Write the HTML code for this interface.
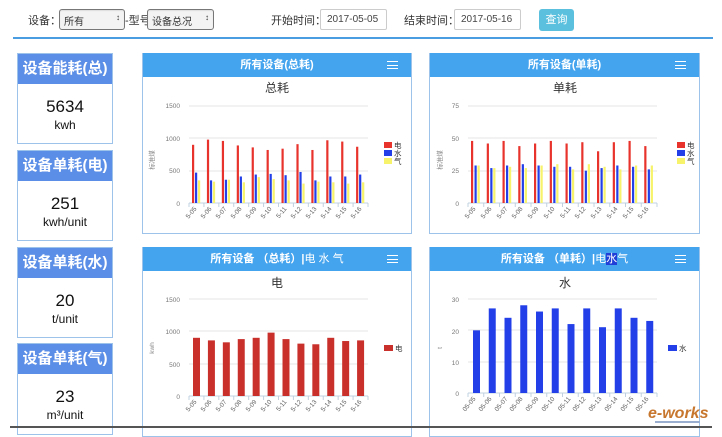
<!DOCTYPE html>
<html><head><meta charset="utf-8">
<style>
*{box-sizing:border-box;margin:0;padding:0}
body{width:722px;height:435px;background:#fff;position:relative;overflow:hidden;font-family:"Liberation Sans","Noto Sans CJK SC",sans-serif;color:#333}
.a{position:absolute}
.lbl{font-size:11px;color:#333;top:12px}
.sel{top:9px;height:21px;border:1px solid #777;border-radius:3px;background:#f3f3f3;font-size:10px;padding:3px 4px;box-shadow:inset 0 1px 1px #ddd}
.sel:after{content:"\2195";position:absolute;right:4px;top:3px;font-size:8px}
.inp{top:9px;height:21px;border:1px solid #ccc;border-radius:2px;font-size:10px;padding:4px 6px;color:#444}
.card{left:17px;width:96px;border:1px solid #9dc3ea}
.card .h{background:#5b8ee6;color:#fff;font-weight:bold;font-size:15px;height:30px;line-height:30px;text-align:center}
.card .n{text-align:center;font-size:17px;color:#111;margin-top:13px;line-height:20px}
.card .u{text-align:center;font-size:12px;color:#111;line-height:16px}
.pan{border:1px solid #9dc3ea;border-top:none}
.ph{position:absolute;left:0;right:0;top:0;height:24px;background:#45a4ee;color:#fff;font-weight:bold;font-size:11px;line-height:24px;text-align:center}
.hb{position:absolute;right:13px;top:8px;width:11px;height:8px;border-top:1px solid #fff;border-bottom:1px solid #fff}
.hb:after{content:"";position:absolute;left:0;right:0;top:2.5px;border-top:1px solid #fff}
svg{position:absolute;left:0;top:0}
svg text{font-family:"Liberation Sans","Noto Sans CJK SC",sans-serif}
</style></head><body>
<div class="a lbl" style="left:28px">设备：</div>
<div class="a sel" style="left:59px;width:66px">所有</div>
<div class="a lbl" style="left:125px">-型号</div>
<div class="a sel" style="left:147px;width:67px">设备总况</div>
<div class="a lbl" style="left:271px">开始时间：</div>
<div class="a inp" style="left:320px;width:67px">2017-05-05</div>
<div class="a lbl" style="left:404px">结束时间：</div>
<div class="a inp" style="left:454px;width:67px">2017-05-16</div>
<div class="a" style="left:539px;top:9px;width:35px;height:22px;background:#5bc0de;border-radius:3px;color:#fff;font-size:11px;line-height:22px;text-align:center">查询</div>
<div class="a" style="left:13px;top:37px;width:700px;height:2px;background:#4a9de0"></div>

<div class="a card" style="top:53px;height:91px"><div class="h">设备能耗(总)</div><div class="n">5634</div><div class="u">kwh</div></div>
<div class="a card" style="top:150px;height:91px"><div class="h">设备单耗(电)</div><div class="n">251</div><div class="u">kwh/unit</div></div>
<div class="a card" style="top:247px;height:91px"><div class="h">设备单耗(水)</div><div class="n">20</div><div class="u">t/unit</div></div>
<div class="a card" style="top:343px;height:92px"><div class="h">设备单耗(气)</div><div class="n">23</div><div class="u">m³/unit</div></div>

<div class="a pan" style="left:142px;top:53px;width:270px;height:181px"><div class="ph">所有设备(总耗)<div class="hb"></div></div></div>
<div class="a pan" style="left:429px;top:53px;width:271px;height:181px"><div class="ph">所有设备(单耗)<div class="hb"></div></div></div>
<div class="a pan" style="left:142px;top:247px;width:270px;height:190px"><div class="ph">所有设备 （总耗）|<span style="font-weight:normal">电 水 气</span><div class="hb"></div></div></div>
<div class="a pan" style="left:429px;top:247px;width:271px;height:190px"><div class="ph">所有设备 （单耗）|<span style="font-weight:normal">电<span style="background:#1f3fd6">水</span>气</span><div class="hb"></div></div></div>

<svg id="s" width="722" height="435" viewBox="0 0 722 435">
<g font-size="12" fill="#333" text-anchor="middle">
<text x="277" y="92">总耗</text><text x="565" y="92">单耗</text>
<text x="277" y="287">电</text><text x="565" y="287">水</text>
</g>
<g font-size="6.5" fill="#777" text-anchor="end">
<text x="180" y="108">1500</text><text x="180" y="141">1000</text><text x="180" y="173">500</text><text x="180" y="206">0</text>
<text x="459" y="108">75</text><text x="459" y="141">50</text><text x="459" y="173">25</text><text x="459" y="206">0</text>
<text x="180" y="302">1500</text><text x="180" y="334">1000</text><text x="180" y="367">500</text><text x="180" y="399">0</text>
<text x="459" y="302">30</text><text x="459" y="334">20</text><text x="459" y="365">10</text><text x="459" y="396">0</text>
</g>
<g font-size="6.5" fill="#888">
<text transform="translate(154,160) rotate(-90)" text-anchor="middle">标准煤</text>
<text transform="translate(442,160) rotate(-90)" text-anchor="middle">标准煤</text>
<text transform="translate(154,348) rotate(-90)" text-anchor="middle">kwh</text>
<text transform="translate(442,348) rotate(-90)" text-anchor="middle">t</text>
</g>
<g id="bars"></g>
<g font-size="7.5" fill="#333">
<rect x="384" y="142" width="8" height="6" fill="#e8332c"/><text x="394" y="148">电</text>
<rect x="384" y="150" width="8" height="6" fill="#2340e8"/><text x="394" y="156">水</text>
<rect x="384" y="158" width="8" height="6" fill="#f7f36a"/><text x="394" y="164">气</text>
<rect x="677" y="142" width="8" height="6" fill="#e8332c"/><text x="687" y="148">电</text>
<rect x="677" y="150" width="8" height="6" fill="#2340e8"/><text x="687" y="156">水</text>
<rect x="677" y="158" width="8" height="6" fill="#f7f36a"/><text x="687" y="164">气</text>
<rect x="384" y="345" width="9" height="6" fill="#c9302c"/><text x="395" y="351">电</text>
<rect x="668" y="345" width="9" height="6" fill="#2340e8"/><text x="679" y="351">水</text>
</g>
<g font-size="6.5" fill="#666" text-anchor="end">
<g transform="translate(0,209)">
<text transform="translate(197,0) rotate(-50)">5-05</text><text transform="translate(212,0) rotate(-50)">5-06</text><text transform="translate(227,0) rotate(-50)">5-07</text><text transform="translate(242,0) rotate(-50)">5-08</text><text transform="translate(257,0) rotate(-50)">5-09</text><text transform="translate(272,0) rotate(-50)">5-10</text><text transform="translate(287,0) rotate(-50)">5-11</text><text transform="translate(302,0) rotate(-50)">5-12</text><text transform="translate(317,0) rotate(-50)">5-13</text><text transform="translate(332,0) rotate(-50)">5-14</text><text transform="translate(347,0) rotate(-50)">5-15</text><text transform="translate(362,0) rotate(-50)">5-16</text>
</g>
<g transform="translate(0,209)">
<text transform="translate(476,0) rotate(-50)">5-05</text><text transform="translate(492,0) rotate(-50)">5-06</text><text transform="translate(508,0) rotate(-50)">5-07</text><text transform="translate(523,0) rotate(-50)">5-08</text><text transform="translate(539,0) rotate(-50)">5-09</text><text transform="translate(555,0) rotate(-50)">5-10</text><text transform="translate(571,0) rotate(-50)">5-11</text><text transform="translate(586,0) rotate(-50)">5-12</text><text transform="translate(602,0) rotate(-50)">5-13</text><text transform="translate(618,0) rotate(-50)">5-14</text><text transform="translate(634,0) rotate(-50)">5-15</text><text transform="translate(649,0) rotate(-50)">5-16</text>
</g>
<g transform="translate(0,402)">
<text transform="translate(197,0) rotate(-50)">5-05</text><text transform="translate(212,0) rotate(-50)">5-06</text><text transform="translate(227,0) rotate(-50)">5-07</text><text transform="translate(242,0) rotate(-50)">5-08</text><text transform="translate(257,0) rotate(-50)">5-09</text><text transform="translate(272,0) rotate(-50)">5-10</text><text transform="translate(287,0) rotate(-50)">5-11</text><text transform="translate(302,0) rotate(-50)">5-12</text><text transform="translate(317,0) rotate(-50)">5-13</text><text transform="translate(332,0) rotate(-50)">5-14</text><text transform="translate(347,0) rotate(-50)">5-15</text><text transform="translate(362,0) rotate(-50)">5-16</text>
</g>
<g transform="translate(0,399)">
<text transform="translate(476,0) rotate(-50)">05-05</text><text transform="translate(492,0) rotate(-50)">05-06</text><text transform="translate(508,0) rotate(-50)">05-07</text><text transform="translate(523,0) rotate(-50)">05-08</text><text transform="translate(539,0) rotate(-50)">05-09</text><text transform="translate(555,0) rotate(-50)">05-10</text><text transform="translate(571,0) rotate(-50)">05-11</text><text transform="translate(586,0) rotate(-50)">05-12</text><text transform="translate(602,0) rotate(-50)">05-13</text><text transform="translate(618,0) rotate(-50)">05-14</text><text transform="translate(634,0) rotate(-50)">05-15</text><text transform="translate(649,0) rotate(-50)">05-16</text>
</g>
</g>
<text x="648" y="418" font-size="16" font-weight="bold" font-style="italic" fill="#c8772e" font-family="Liberation Serif,serif">e-works</text>
<rect x="655" y="421" width="45" height="2" fill="#9aaed0"/>
<rect x="10" y="426" width="702" height="2" fill="#555"/>
</svg>
<script>
var g=document.getElementById('bars'),h='';
function grid(x0,x1,ys){ys.forEach(function(y){h+='<line x1="'+x0+'" x2="'+x1+'" y1="'+y+'" y2="'+y+'" stroke="#e6e6e6" stroke-width="1"/>';});
 var y=ys[ys.length-1];h+='<line x1="'+x0+'" x2="'+x1+'" y1="'+y+'" y2="'+y+'" stroke="#c0d0e0"/>';
 var w=(x1-x0)/12;for(var i=0;i<=12;i++){var x=x0+i*w;h+='<line x1="'+x+'" x2="'+x+'" y1="'+y+'" y2="'+(y+4)+'" stroke="#c0d0e0"/>';}}
function bars(x0,x1,y0,yt,max,data,off,bw,col){var w=(x1-x0)/12;data.forEach(function(v,i){var hh=v/max*(y0-yt);h+='<rect x="'+(x0+i*w+off)+'" y="'+(y0-hh)+'" width="'+bw+'" height="'+hh+'" fill="'+col+'"/>';});}
grid(189,368,[106,138,171,203]);grid(468,657,[106,138,171,203]);grid(189,368,[299,331,364,396]);grid(468,657,[299,330,362,393]);
bars(189,368,203,106,1500,[900,980,960,890,860,820,840,910,820,970,950,870],3,2.2,'#e8332c');
bars(189,368,203,106,1500,[470,350,360,410,440,450,430,480,350,410,410,440],6,2.2,'#2340e8');
bars(189,368,203,106,1500,[350,330,360,320,400,370,350,300,330,320,300,320],9,2.2,'#f7f36a');
bars(468,657,203,106,75,[48,46,48,44,46,48,46,47,40,47,48,44],3,2.2,'#e8332c');
bars(468,657,203,106,75,[29,27,29,30,29,28,28,25,27,29,28,26],6.5,2.2,'#2340e8');
bars(468,657,203,106,75,[29,27,28,27,29,30,26,30,28,26,29,29],9.5,2.2,'#f7f36a');
bars(189,368,396,299,1500,[900,860,830,880,900,980,880,810,800,900,850,860],4,7,'#c9302c');
bars(468,657,393,299,30,[20,27,24,28,26,27,22,27,21,27,24,23],5,7,'#2340e8');
g.innerHTML=h;
</script>
</body></html>
